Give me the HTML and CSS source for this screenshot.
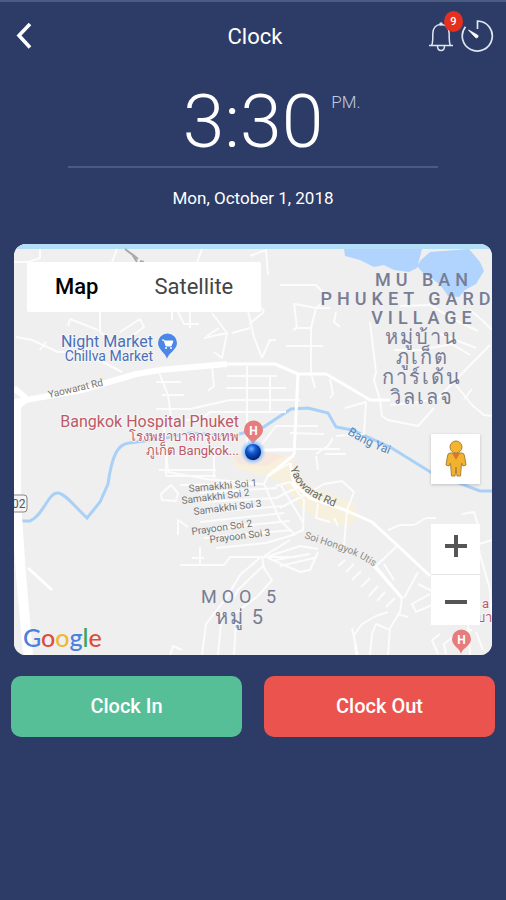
FILE: index.html
```html
<!DOCTYPE html>
<html lang="en">
<head>
<meta charset="utf-8">
<meta name="viewport" content="width=device-width, initial-scale=1">
<title>Clock</title>
<link rel="stylesheet" href="styles.css">
</head>
<body>
<header class="topbar">
  <button class="icon-button back" type="button" aria-label="Back">
    <svg width="16" height="28" viewBox="0 0 16 28"><path d="M14 1 3 12.500 14 24.500" fill="none" stroke="#fff" stroke-width="3.600"/></svg>
  </button>
  <h1 class="title">Clock</h1>
  <div class="actions">
    <button class="icon-button bell" type="button" aria-label="Notifications">
      <svg width="26" height="32" viewBox="0 0 26 32" fill="none" stroke="#dfe5f2" stroke-width="1.500">
        <path d="M1 24.500H25M3.500 24.500C5 22 4.800 19 4.800 13C4.800 7 8 3.500 13 3.500S21.200 7 21.200 13C21.200 19 21 22 22.500 24.500M9.500 25C9.500 31 16.500 31 16.500 25"/>
        <circle cx="13" cy="3" r="1"/>
      </svg>
      <span class="badge">9</span>
    </button>
    <button class="icon-button" type="button" aria-label="Timer">
      <svg width="34" height="34" viewBox="0 0 34 34">
        <path d="M5.500 6.700A15 15 0 1 0 17.500 1V9" fill="none" stroke="#dfe5f2" stroke-width="1.700"/>
        <path d="M8.500 10 17.500 15A1.500 1.500 0 0 1 15.500 17.500Z" fill="#fff" stroke="#fff" stroke-width=".800"/>
      </svg>
    </button>
  </div>
</header>

<main>
  <section class="clock">
    <div class="time"><span class="digits">3:30</span><span class="period">PM.</span></div>
    <p class="date">Mon, October 1, 2018</p>
  </section>

  <section class="map" aria-label="Map">
    <svg class="map-canvas" viewBox="14 244 478 411" preserveAspectRatio="xMidYMid slice">
      <defs>
        <radialGradient id="dot" cx=".4" cy=".3" r=".7"><stop offset="0" stop-color="#6fb4ff"/><stop offset=".4" stop-color="#1259cf"/><stop offset="1" stop-color="#041d70"/></radialGradient>
        <radialGradient id="halo"><stop offset=".5" stop-color="#4da3ff"/><stop offset="1" stop-color="#9fd0ff" stop-opacity="0"/></radialGradient>
        <path id="yaowarat" d="M290 468C296 486 305 496 338 508"/>
        <path id="bangyai" d="M347 434C360 442 374 449 394 456"/>
        <path id="hongyok" d="M304 538C328 547 352 550 380 571"/>
      </defs>
      <rect x="14" y="244" width="478" height="411" fill="#efefef"/>
      <rect x="14" y="244" width="478" height="5" fill="#b4def5"/>
      <path class="water" d="M344 249H422L417 268 409 272 394 270 384 265 374 267 360 260 345 256ZM421 260 430 252 469 249 480 262 484 271 476 284 465 290 459 297 448 296 441 286 434 280 424 274 417 266Z"/>
      <path class="zone" d="M232 457 262 452 290 456 304 482 318 490 352 502 358 516 348 526 318 520 302 508 284 484 268 477 236 468Z"/>
      <path class="zone pink" d="M232 455 262 451 284 456 266 466 238 464Z"/>
      <g class="river">
        <path d="M16 521H30C44 515 48 492 58 493 66 494 75 507 87 518L100 502 108 484C112 455 118 444 129 443L160 439 190 433 232 436 262 428 291 409 308 408 328 413 336 427 352 430 390 447 432 473 480 491 493 491"/>
      </g>
      <g class="road thin">
        <path d="M14 262 28 262 40 258V249M117 249 112 262M202 249 197 262M100 311V332L118 348M68 326 70 319 98 330M120 332 140 319 144 327 124 342M16 337 32 340 58 352H84L122 372M40 350 46 342M172 311V320M190 311V328M178 312 184 324H199M212 313 227 333 204 338M219 328 207 336M227 333 222 358 214 352M250 328 232 333M248 311 254 337 262 358M249 324 264 312 250 292M262 358 270 340 276 340M250 256 266 250 268 275"/>
        <path d="M280 285H316L328 298M294 303 297 328 293 330M295 304 316 308H330M295 328H311L316 308 326 300M311 328V373L315 388M286 346H323M336 312 334 322 340 327M370 322 376 372 374 380 380 400 382 416 388 420 418 426 434 408M330 379 333 394 330 398M390 405 420 402 438 398 490 345M394 350H420L452 344 470 355M456 385 472 405 484 415 492 416M464 399 472 389M400 306 430 305 455 320 478 331M470 310 482 320 492 330M440 334 476 348"/>
        <path d="M212 367 214 386 208 391M227 376H277M226 388H286M226 412H286M270 376V412M158 370 168 395 172 424M156 382H181M162 395H184M156 409H190L230 400H300M156 420H200L210 412H248M164 428 168 472 206 479 264 484M159 470H216M166 450V476M166 476H216M214 450V478M247 454V366M290 433 324 434M262 444 276 426H318M345 408 366 402 364 434 336 436M276 449H340M316 456 318 470M316 454 328 446 333 438M325 454H346"/>
        <path d="M161 494 171 485 178 493 176 501 162 500ZM180 485 264 484M200 493 277 488M202 502 276 498M200 513 282 506M200 522 284 513M210 529 290 521M204 538 292 530M216 548 266 543 296 534M178 535V520L188 527M200 547V566M180 565H224L230 557H296M192 558H204M262 556 240 575 227 597 206 624 202 655M263 566 238 590 232 600M262 556 264 568 272 580 258 596 234 614M218 655 222 612M234 655 236 620M170 655 173 646 182 650"/>
        <path d="M264 484 268 476 290 463M264 484 280 520 294 534 303 530 304 500 290 482 276 486M280 484 303 522M276 498 300 486M280 508 310 492 324 484 342 481 354 492 347 510 344 545M304 494 318 502M318 504 316 518 330 522M334 518 338 526M264 556 290 540M266 557 300 546 318 549M268 558 300 572 310 570 318 552M280 566 314 558M275 560 310 554M345 560 338 566M354 564 346 572M361 571 352 580M370 578 361 587M378 586 369 596M385 592 377 601M395 598 386 607"/>
        <path d="M388 530 400 525H414L426 518 436 518M462 514 474 512 478 525 476 540 490 590 492 620M476 545 492 540M397 546 376 566 402 598 400 612 390 628 388 655M384 564 394 580M418 572 404 598M397 614 408 617M418 584 430 590 438 598M430 594 412 604 416 612 432 605M356 655 354 635 362 624 376 616 388 612M370 655 372 634 376 624 390 630M352 628 358 655M438 654 432 640 440 634M446 654 444 644 458 633 472 630M467 610 470 655M483 650 476 632"/>
      </g>
      <g class="road mid">
        <path d="M227 364H275L298 374H326L350 388 370 400H390M298 374 294 455M290 463 294 484 310 498 345 510 372 522 396 544 430 576M294 455 268 476M247 450H292M402 598 374 566M28 568 52 590"/>
      </g>
      <path class="road main" d="M14 402 82 390 136 374 160 370 227 364"/>
      <path class="road main" d="M14 410 28 398M14 388 26 398"/>
      <path class="road highway" d="M16 400V500L21 575 28 655"/>
      <path d="M125 249 138 259 132 254 137 262M140 261 144 262" fill="none" stroke="#a9a9a9" stroke-width="2"/>

      <g class="shield"><rect x="6" y="495" width="21" height="17" rx="3"/><text x="12" y="508">02</text></g>

      <g class="place-blue">
        <text class="place" x="153" y="347">Night Market</text>
        <text class="place-sub latin" x="153" y="361">Chillva Market</text>
      </g>
      <path d="M167 359C166 353 158 350 158 343A9 9 0 0 1 177 343C177 350 168 353 167 359Z" fill="#4b87e8"/>
      <path d="M162 340H164L166 346H171L173 341H165" fill="#fff" stroke="#fff"/><circle cx="166" cy="348" r="1" fill="#fff"/><circle cx="171" cy="348" r="1" fill="#fff"/>

      <g class="place-red">
        <text class="place" x="239" y="427">Bangkok Hospital Phuket</text>
        <text class="place-sub" x="239" y="441">โรงพยาบาลกรุงเทพ</text>
        <text class="place-sub" x="239" y="455">ภูเก็ต Bangkok...</text>
      </g>
      <path d="M253 446C252 439 244 437 244 430A9 9 0 0 1 263 430C263 437 254 439 253 446Z" fill="#e67c7c"/>
      <text class="pin-letter" x="253.500" y="435">H</text>
      <circle cx="253" cy="452" r="13" fill="url(#halo)"/>
      <circle cx="253" cy="452" r="8" fill="url(#dot)"/>

      <g class="street">
        <text transform="translate(49 398) rotate(-13)">Yaowarat Rd</text>
        <text transform="translate(189 492) rotate(-5)">Samakkhi Soi 1</text>
        <text transform="translate(182 504) rotate(-7)">Samakkhi Soi 2</text>
        <text transform="translate(194 515) rotate(-7)">Samakkhi Soi 3</text>
        <text transform="translate(192 535) rotate(-8)">Prayoon Soi 2</text>
        <text transform="translate(210 543) rotate(-7)">Prayoon Soi 3</text>
        <text class="street-major"><textPath href="#yaowarat">Yaowarat Rd</textPath></text>
        <text class="street-light"><textPath href="#hongyok">Soi Hongyok Utis</textPath></text>
        <text class="river-name"><textPath href="#bangyai">Bang Yai</textPath></text>
      </g>

      <g class="area">
        <text x="424" y="286">MU BAN</text>
        <text x="408" y="305">PHUKET GARD</text>
        <text x="424" y="324">VILLAGE</text>
        <text class="thai" x="422" y="344">หมู่บ้าน</text>
        <text class="thai" x="422" y="364">ภูเก็ต</text>
        <text class="thai" x="422" y="384">การ์เด้น</text>
        <text class="thai" x="422" y="404">วิลเลจ</text>
      </g>
      <g class="area area-light">
        <text x="241" y="603">MOO 5</text>
        <text class="thai" x="240" y="624">หมู่ 5</text>
      </g>
      <g class="place-red">
        <text class="place-sub" x="489" y="608">a</text>
        <text class="place-sub" x="492" y="622">บา</text>
      </g>
      <path d="M461 654C460 648 452 646 452 639A9 9 0 0 1 471 639C471 646 462 648 461 654Z" fill="#e67c7c"/>
      <text class="pin-letter" x="461.500" y="644">H</text>
    </svg>

    <div class="map-types">
      <button class="map-type selected" type="button">Map</button>
      <button class="map-type" type="button">Satellite</button>
    </div>

    <div class="map-logo"><span class="g-blue">G</span><span class="g-red">o</span><span class="g-yellow">o</span><span class="g-blue">g</span><span class="g-green">l</span><span class="g-red">e</span></div>

    <div class="map-tools">
      <button class="tool" type="button" aria-label="Street view">
        <svg width="22" height="38" viewBox="0 0 22 38" stroke="#a9813a" stroke-width="1">
          <path d="M5 13H17Q19 13 19.500 16L21 25 18 26 16.500 23 15.500 36H12L11 27 10 36H6.500L5.500 23 4 26 1 25 2.500 16Q3 13 5 13Z" fill="#f2b22f"/>
          <path d="M7 13 11 20 15 13Z" fill="#d9772c" stroke="none"/>
          <circle cx="11" cy="7" r="6" fill="#f5b52e"/>
        </svg>
      </button>
      <div class="zoom">
        <button class="tool zoom-in" type="button" aria-label="Zoom in"><svg width="22" height="22" viewBox="0 0 22 22"><path d="M0 11H22M11 0V22" stroke="#555" stroke-width="4"/></svg></button>
        <button class="tool zoom-out" type="button" aria-label="Zoom out"><svg width="22" height="22" viewBox="0 0 22 22"><path d="M0 11H22" stroke="#555" stroke-width="4"/></svg></button>
      </div>
    </div>
  </section>

  <div class="punch">
    <button class="punch-button in" type="button">Clock In</button>
    <button class="punch-button out" type="button">Clock Out</button>
  </div>
</main>
</body>
</html>
```
FILE: styles.css
```css
* {
  box-sizing: border-box;
}

body {
  margin: 0;
  min-height: 100vh;
  border-top: 2px solid #4b5c83;
  background: #2c3c66;
  color: #fff;
  font-family: Roboto, "Noto Sans", sans-serif;
}

button {
  padding: 0;
  border: 0;
  background: none;
  color: inherit;
  font: inherit;
  cursor: pointer;
}

svg {
  display: block;
}

.topbar {
  display: grid;
  grid-template-columns: 1fr auto 1fr;
  align-items: center;
  height: 70px;
  padding: 0 12px 0 16px;
}

.icon-button {
  position: relative;
}

.back {
  justify-self: start;
}

.title {
  margin: 0;
  font-size: 22px;
  font-weight: 400;
  line-height: 28px;
}

.actions {
  display: flex;
  justify-content: flex-end;
  align-items: center;
  gap: 6px;
}

.badge {
  position: absolute;
  top: -10px;
  right: -9px;
  width: 19px;
  height: 21px;
  border-radius: 50%;
  background: #e5301f;
  font-size: 11px;
  font-weight: 500;
  line-height: 21px;
  text-align: center;
}

.clock {
  text-align: center;
}

.time {
  display: grid;
  grid-template-columns: 1fr auto 1fr;
  margin: 0 68px;
  padding: 12px 0 8px;
  border-bottom: 2px solid #4a5a84;
  font-weight: 300;
}

.digits {
  grid-column: 2;
  font-size: 75px;
  line-height: 74px;
}

.period {
  padding: 8px 0 0 8px;
  color: #c3cbe0;
  font-size: 17px;
  line-height: 20px;
  text-align: left;
}

.date {
  margin: 0;
  padding: 20px 0 36px;
  font-size: 17px;
  line-height: 20px;
}

.map {
  position: relative;
  margin: 0 14px;
  aspect-ratio: 478 / 411;
  border-radius: 12px;
  overflow: hidden;
  background: #efefef;
}

.map-canvas {
  width: 100%;
  height: 100%;
}

.water {
  fill: #b0d4fd;
}

.zone {
  fill: #f7f0dc;
}

.zone.pink {
  fill: #f7e7df;
}

.river {
  fill: none;
  stroke: #a9d1f7;
  stroke-width: 3;
}

.road {
  fill: none;
  stroke: #fff;
  stroke-linejoin: round;
}

.thin {
  stroke: #fcfcfc;
  stroke-width: 2;
}

.mid {
  stroke-width: 3;
}

.main {
  stroke-width: 6;
}

.highway {
  stroke-width: 10;
}

.shield rect {
  fill: #f5f5f5;
  stroke: #888;
}

.shield text {
  fill: #555;
  font-size: 12px;
}

.place,
.place-sub {
  text-anchor: end;
  paint-order: stroke;
  stroke: #f6f6f6;
  stroke-width: 2px;
}

.place {
  font-size: 16px;
}

.place-sub {
  font-size: 13px;
}

.latin {
  font-size: 14px;
}

.place-blue {
  fill: #4c6fb5;
}

.place-red {
  fill: #bd5a66;
}

.pin-letter {
  fill: #fff;
  font-size: 12px;
  font-weight: 700;
  text-anchor: middle;
}

.street {
  fill: #747474;
  font-size: 10px;
}

.street-major {
  fill: #666;
  font-size: 11px;
}

.street-light {
  fill: #8c8c8c;
}

.river-name {
  fill: #5783bb;
  font-size: 12px;
}

.area {
  fill: #777d94;
  font-size: 18px;
  font-weight: 500;
  letter-spacing: 5px;
  text-anchor: middle;
}

.area-light {
  font-weight: 400;
}

.thai {
  font-size: 20px;
  letter-spacing: 2px;
}

.map-types {
  position: absolute;
  top: 18px;
  left: 13px;
  display: flex;
  gap: 56px;
  padding: 0 28px;
  border-radius: 2px;
  background: #fff;
  color: #444;
  font-size: 22px;
  line-height: 50px;
}

.selected {
  color: #000;
  font-weight: 500;
}

.map-logo {
  position: absolute;
  bottom: 4px;
  left: 9px;
  font-family: Lato, sans-serif;
  font-size: 25px;
  font-weight: 500;
  line-height: 28px;
}

.g-blue {
  color: #4a80e0;
}

.g-red {
  color: #dc4d3c;
}

.g-yellow {
  color: #edb932;
}

.g-green {
  color: #41a35b;
}

.map-tools {
  position: absolute;
  right: 12px;
  bottom: 30px;
  display: flex;
  flex-direction: column;
  gap: 40px;
}

.tool {
  display: grid;
  place-items: center;
  width: 49px;
  height: 50px;
  background: #fff;
  box-shadow: 0 1px 3px rgba(0, 0, 0, 0.2);
}

.zoom {
  display: grid;
  gap: 1px;
  background: #e6e6e6;
}

.zoom .tool {
  box-shadow: none;
}

.zoom-in {
  padding-bottom: 6px;
}

.zoom-out {
  padding-top: 4px;
}

.punch {
  display: grid;
  grid-template-columns: 1fr 1fr;
  gap: 22px;
  padding: 21px 11px;
}

.punch-button {
  padding: 16px 0;
  border-radius: 10px;
  font-size: 20px;
  font-weight: 500;
  line-height: 29px;
}

.in {
  background: #57bf98;
}

.out {
  background: #eb534f;
}
```
